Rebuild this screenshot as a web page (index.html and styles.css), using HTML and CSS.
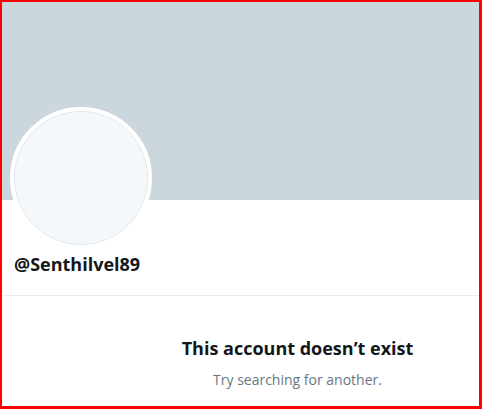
FILE: index.html
```html
<!DOCTYPE html>
<html lang="en">
<head>
    <meta charset="UTF-8">
    <title>Profile</title>
    <link rel="stylesheet" href="styles.css">
</head>
<body>
    <div class="frame">
        <div class="banner"></div>
        <div class="profile">
            <div class="avatar"><div class="avatar-inner"></div></div>
            <div class="handle">@Senthilvel89</div>
        </div>
        <div class="empty">
            <h2>This account doesn’t exist</h2>
            <p>Try searching for another.</p>
        </div>
    </div>
</body>
</html>
```

FILE: styles.css
```css
body {
    margin: 0;
    font-family: "Open Sans", "Noto Sans", sans-serif;
    background: #fff;
}

.frame {
    width: 482px;
    height: 409px;
    box-sizing: border-box;
    border: 2px solid #ff0000;
    border-right-width: 3px;
    border-bottom-width: 3px;
    overflow: hidden;
}

.banner {
    height: 198px;
    background-color: #ccd6dd;
}

.profile {
    position: relative;
    height: 95px;
    padding: 0 12px;
    border-bottom: 1px solid #e6ecf0;
}

.avatar {
    position: absolute;
    left: 8px;
    top: -93px;
    width: 134px;
    height: 134px;
    border: 4px solid #fff;
    border-radius: 50%;
    background: #fff;
}

.avatar-inner {
    width: 100%;
    height: 100%;
    box-sizing: border-box;
    border: 1px solid #e1e8ed;
    border-radius: 50%;
    background: #f5f8fa;
}

.handle {
    padding-top: 52px;
    font-size: 18px;
    font-weight: 700;
    color: #14171a;
}

.empty {
    padding-left: 114px;
    text-align: center;
}

.empty h2 {
    margin: 40px 0 0;
    font-size: 18px;
    font-weight: 700;
    color: #14171a;
}

.empty p {
    margin: 10px 0 0;
    font-size: 14px;
    color: #657786;
}
```
